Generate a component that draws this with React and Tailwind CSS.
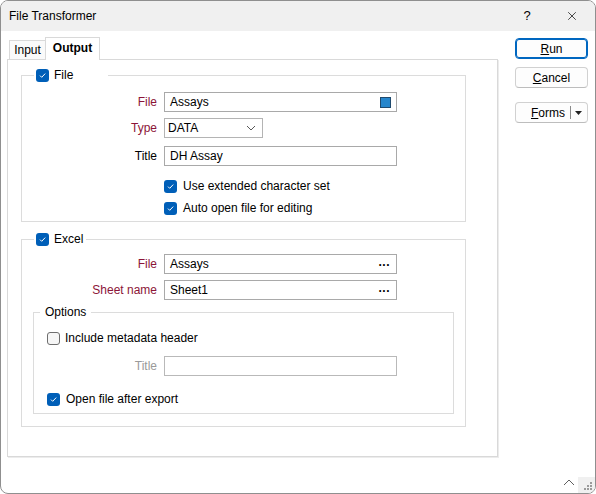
import { X } from "lucide-react";

const font = "font-['Segoe_UI','Liberation_Sans',Arial,sans-serif]";

function Check({ checked = true }) {
  if (!checked) {
    return <span className="block w-[13px] h-[13px] rounded-[3px] border border-[#6e6e6e] bg-[#f6f6f6] shrink-0" />;
  }
  return (
    <span className="flex items-center justify-center w-[13px] h-[13px] rounded-[3px] bg-[#005fb8] shrink-0">
      <svg width="9" height="9" viewBox="0 0 9 9">
        <path d="M2 4.6 L3.7 6.3 L7.2 2.6" fill="none" stroke="#fff" strokeWidth="1" />
      </svg>
    </span>
  );
}

function Label({ children, red, disabled }) {
  const color = disabled ? "text-[#9a9a9a]" : red ? "text-[#8c1538]" : "text-black";
  return <span className={`text-right pr-[7px] ${color}`}>{children}</span>;
}

function TextBox({ value, children, disabled }) {
  return (
    <div className={`flex items-center h-[20px] w-[233px] border ${disabled ? "border-[#b9b9b9]" : "border-[#a9a9a9]"} bg-white pl-[5px] pr-[6px]`}>
      <span className="flex-1 leading-none">{value}</span>
      {children}
    </div>
  );
}

function Dots() {
  return <span className="text-[12px] font-bold leading-none tracking-[0.5px] -mt-[4px]">...</span>;
}

function Button({ children, primary }) {
  return (
    <div
      className={`flex items-center justify-center h-[21px] w-[73px] rounded-[4px] bg-[#fdfdfd] ${
        primary ? "border border-[#0067c0] shadow-[inset_0_0_0_1px_#0067c0]" : "border border-[#d1d1d1] border-b-[#bdbdbd]"
      }`}
    >
      {children}
    </div>
  );
}

export default function App() {
  return (
    <div className={`${font} text-[12px] text-black w-[596px] h-[494px] relative overflow-hidden bg-white border border-[#8f8f8f] rounded-[8px]`}>
      {/* title bar */}
      <div className="h-[30px] bg-[#f0f0f0] flex items-center pl-[8px]">
        <span className="flex-1">File Transformer</span>
        <span className="w-[20px] text-center text-[13px] mr-[28px]">?</span>
        <X size={14} strokeWidth={1.2} className="mr-[16px]" />
      </div>

      <div className="flex">
        {/* left: tabs + panel */}
        <div className="ml-[6px] mt-[6px]">
          <div className="flex items-end h-[22px] pl-[2px]">
            <div className="h-[19px] w-[37px] border border-b-0 border-[#d9d9d9] bg-[#fafafa] flex items-center justify-center">
              Input
            </div>
            <div className="relative z-10 -ml-px -mb-px h-[23px] w-[55px] border border-b-0 border-[#d9d9d9] bg-white flex items-center justify-center font-bold pb-[2px]">
              Output
            </div>
          </div>
          <div className="w-[491px] h-[398px] border border-[#d9d9d9] shadow-[1px_1px_0_#ececec] pl-[13px] pt-[7px]">
            {/* File group */}
            <fieldset className="w-[445px] border border-[#dcdcdc] pb-[5px]">
              <legend className="ml-[12px] w-[74px] h-[16px] flex items-center gap-[5px] pl-[2px]">
                <Check />
                <span>File</span>
              </legend>
              <div className="grid grid-cols-[142px_233px] items-center mt-[9px]">
                <Label red>File</Label>
                <TextBox value="Assays">
                  <span className="w-[11px] h-[11px] bg-[#2686cc] border border-[#1f4a6e] -mr-[1px]" />
                </TextBox>
              </div>
              <div className="grid grid-cols-[142px_233px] items-center mt-[6px]">
                <Label red>Type</Label>
                <div className="flex items-center h-[20px] w-[99px] border border-[#b4b4b4] pl-[3px] pr-[6px]">
                  <span className="flex-1">DATA</span>
                  <svg width="10" height="6" viewBox="0 0 10 6">
                    <path d="M1 1 L5 5 L9 1" fill="none" stroke="#5a5a5a" strokeWidth="1" />
                  </svg>
                </div>
              </div>
              <div className="grid grid-cols-[142px_233px] items-center mt-[8px]">
                <Label>Title</Label>
                <TextBox value="DH Assay" />
              </div>
              <div className="flex items-center gap-[6px] ml-[142px] mt-[12px] h-[16px]">
                <Check />
                <span>Use extended character set</span>
              </div>
              <div className="flex items-center gap-[6px] ml-[142px] mt-[6px] h-[16px]">
                <Check />
                <span>Auto open file for editing</span>
              </div>
            </fieldset>

            {/* Excel group */}
            <fieldset className="w-[445px] border border-[#dcdcdc] mt-[9px] pb-[12px]">
              <legend className="ml-[12px] w-[52px] h-[16px] flex items-center gap-[5px] pl-[2px]">
                <Check />
                <span>Excel</span>
              </legend>
              <div className="grid grid-cols-[142px_233px] items-center mt-[7px]">
                <Label red>File</Label>
                <TextBox value="Assays">
                  <Dots />
                </TextBox>
              </div>
              <div className="grid grid-cols-[142px_233px] items-center mt-[6px]">
                <Label red>Sheet name</Label>
                <TextBox value="Sheet1">
                  <Dots />
                </TextBox>
              </div>

              {/* Options */}
              <fieldset className="ml-[11px] w-[421px] border border-[#dcdcdc] mt-[4px] pb-[6px]">
                <legend className="ml-[6px] px-[5px] h-[16px] flex items-center">Options</legend>
                <div className="flex items-center gap-[5px] ml-[13px] mt-[10px] h-[16px]">
                  <Check checked={false} />
                  <span>Include metadata header</span>
                </div>
                <div className="grid grid-cols-[130px_233px] items-center mt-[10px]">
                  <Label disabled>Title</Label>
                  <TextBox value="" disabled />
                </div>
                <div className="flex items-center gap-[6px] ml-[13px] mt-[15px] h-[16px]">
                  <Check />
                  <span>Open file after export</span>
                </div>
              </fieldset>
            </fieldset>
          </div>
        </div>

        {/* right: buttons */}
        <div className="ml-[17px] mt-[7px] flex flex-col">
          <Button primary>
            <span><u>R</u>un</span>
          </Button>
          <div className="mt-[8px]">
            <Button>
              <span><u>C</u>ancel</span>
            </Button>
          </div>
          <div className="mt-[14px] flex items-center h-[21px] w-[73px] rounded-[4px] bg-[#fdfdfd] border border-[#d1d1d1] border-b-[#bdbdbd]">
            <span className="flex-1 text-right pr-[5px]"><u>F</u>orms</span>
            <span className="w-px h-[13px] bg-[#8a8a8a]" />
            <svg width="15" height="8" viewBox="0 0 15 8" className="mr-[1px]">
              <path d="M4 2 L11 2 L7.5 6 Z" fill="#222" />
            </svg>
          </div>
        </div>
      </div>

      {/* bottom-right corner: collapse chevron and size grip */}
      <svg width="12" height="7" viewBox="0 0 12 7" className="absolute left-[562px] top-[478px]">
        <path d="M1 6 L6 1 L11 6" fill="none" stroke="#606060" strokeWidth="1" />
      </svg>
      <div className="absolute right-0 bottom-0 w-[17px] h-[16px] bg-[#f0f0f0]">
        <svg width="17" height="16" viewBox="0 0 17 16">
          <g fill="#9a9a9a">
            <rect x="12" y="5" width="2" height="2" />
            <rect x="9" y="8" width="2" height="2" />
            <rect x="12" y="8" width="2" height="2" />
            <rect x="6" y="11" width="2" height="2" />
            <rect x="9" y="11" width="2" height="2" />
            <rect x="12" y="11" width="2" height="2" />
          </g>
        </svg>
      </div>
    </div>
  );
}
